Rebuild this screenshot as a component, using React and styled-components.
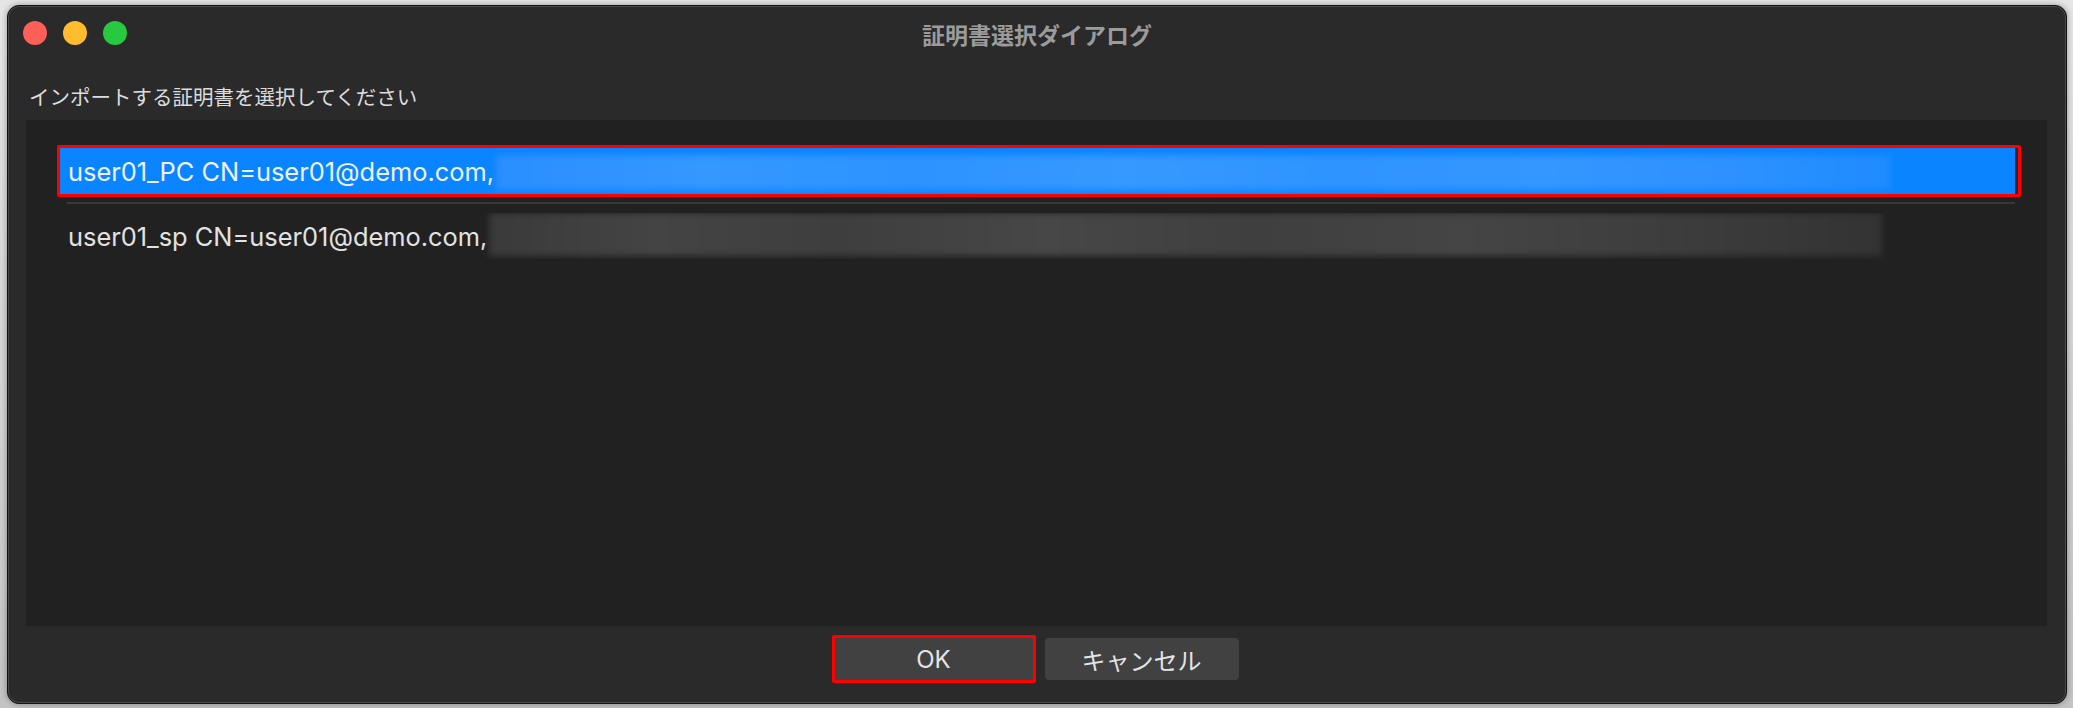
import styled, { createGlobalStyle } from "styled-components";

const GlobalStyle = createGlobalStyle`
  html, body {
    margin: 0;
    padding: 0;
    background: linear-gradient(180deg, #e6e6e6 0%, #c4c4c4 100%);
    font-family: Inter, "Noto Sans CJK JP", sans-serif;
  }
`;

const Page = styled.div`
  width: 2073px;
  height: 708px;
  padding: 5px 6px 4px 7px;
  box-sizing: border-box;
`;

const Window = styled.div`
  height: 100%;
  display: flex;
  flex-direction: column;
  background: #2a2a2a;
  border: 1px solid #111;
  border-radius: 12px;
  box-shadow: inset 0 0 0 1px #4a4a4a, 0 0 6px rgba(0, 0, 0, 0.35);
  box-sizing: border-box;
  overflow: hidden;
`;

const TitleBar = styled.div`
  position: relative;
  height: 56px;
  display: flex;
  align-items: center;
  justify-content: center;
  flex-shrink: 0;
`;

const Lights = styled.div`
  position: absolute;
  left: 15px;
  top: 15px;
  display: flex;
  gap: 16px;
`;

const Light = styled.span`
  width: 24px;
  height: 24px;
  border-radius: 50%;
  background: ${(p) => p.color};
`;

const Title = styled.div`
  font-family: "Noto Sans CJK JP", sans-serif;
  font-size: 23px;
  font-weight: 700;
  color: #9b9b9b;
  margin-top: -1px;
`;

const Body = styled.div`
  flex: 1;
  display: flex;
  flex-direction: column;
  padding: 0 19px 0 18px;
`;

const Prompt = styled.div`
  font-family: "Noto Sans CJK JP", sans-serif;
  font-size: 20.5px;
  line-height: 28px;
  color: #dcdcdc;
  height: 58px;
  box-sizing: border-box;
  padding: 20px 0 0 3px;
`;

const Panel = styled.div`
  height: 506px;
  background: #212121;
  padding: 25px 26px 0 31px;
  box-sizing: border-box;
  display: flex;
  flex-direction: column;
`;

const Row = styled.div`
  height: 52px;
  box-sizing: border-box;
  border: 3px solid ${(p) => (p.$selected ? "#ff0000" : "transparent")};
  border-radius: 2px;
  background-clip: padding-box;
  background-color: ${(p) => (p.$selected ? "#0a84ff" : "transparent")};
  box-shadow: ${(p) => (p.$selected ? "inset -3px 0 0 #1e2733" : "none")};
  display: flex;
  align-items: center;
  padding-left: 8px;
  font-size: 25.4px;
  color: ${(p) => (p.$selected ? "#eef3fb" : "#e2e2e2")};
  white-space: nowrap;
  overflow: hidden;
`;

const Divider = styled.div`
  height: 2px;
  background: #383838;
  margin: 5px 6px 6px 10px;
`;

const Blur = styled.span`
  display: inline-block;
  flex-shrink: 0;
  width: ${(p) => (p.$selected ? "1395px" : "1393px")};
  height: ${(p) => (p.$selected ? "35px" : "43px")};
  margin-top: ${(p) => (p.$selected ? "3px" : "-4px")};
  margin-left: 2px;
  background: ${(p) =>
    p.$selected
      ? "linear-gradient(90deg, #2a8fff 0%, #3398ff 15%, #2d93ff 30%, #3599ff 45%, #2e94ff 60%, #3497ff 75%, #2c91ff 90%, #1e8bff 100%)"
      : "linear-gradient(90deg, #3a3a3a 0%, #444 12%, #3e3e3e 25%, #474747 40%, #3f3f3f 55%, #454545 70%, #3d3d3d 85%, #333 100%)"};
  filter: blur(3px);
`;

const Footer = styled.div`
  flex: 1;
  display: flex;
  justify-content: center;
  align-items: flex-start;
  gap: 6px;
  padding-top: 9px;
`;

const Button = styled.button`
  width: ${(p) => p.$w}px;
  height: 48px;
  box-sizing: border-box;
  border: 3px solid ${(p) => (p.$focused ? "#ff0000" : "transparent")};
  border-radius: ${(p) => (p.$focused ? "2px" : "7px")};
  background: #414141;
  background-clip: padding-box;
  color: #e4e4e4;
  font-family: Inter, "Noto Sans CJK JP", sans-serif;
  font-size: 24px;
  padding: 0;
`;

const App = () => {
  return (
    <Page>
      <GlobalStyle />
      <Window>
        <TitleBar>
          <Lights>
            <Light color="#fe5f57" />
            <Light color="#febc2e" />
            <Light color="#28c840" />
          </Lights>
          <Title>証明書選択ダイアログ</Title>
        </TitleBar>
        <Body>
          <Prompt>インポートする証明書を選択してください</Prompt>
          <Panel>
            <Row $selected>
              user01_PC CN=user01@demo.com,
              <Blur $selected />
            </Row>
            <Divider />
            <Row>
              user01_sp CN=user01@demo.com,
              <Blur />
            </Row>
          </Panel>
          <Footer>
            <Button $focused $w={204}>OK</Button>
            <Button $w={200}>キャンセル</Button>
          </Footer>
        </Body>
      </Window>
    </Page>
  );
};

export default App;
